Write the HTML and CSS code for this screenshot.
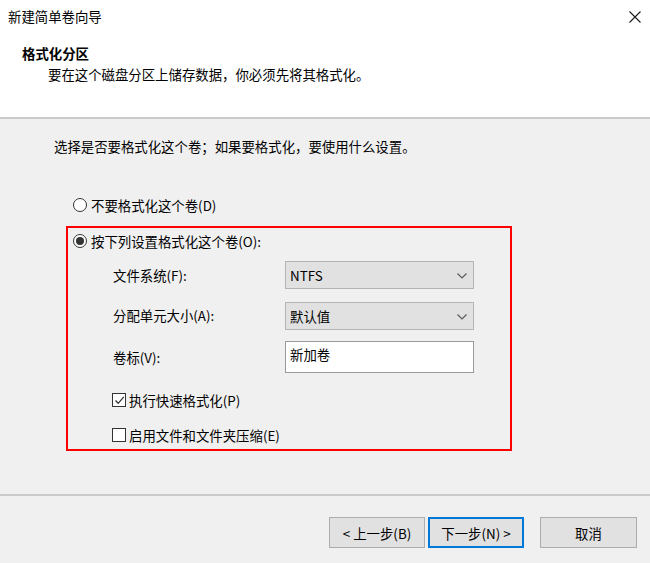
FILE: index.html
```html
<!DOCTYPE html>
<html lang="zh-CN">
<head>
  <meta charset="UTF-8" />
  <meta name="viewport" content="width=device-width, initial-scale=1.0" />
  <title>新建简单卷向导</title>
  <link rel="stylesheet" href="styles.css">
</head>
<body>
  <div class="wizard">
    <header class="head">
      <div class="titlebar">
        <span class="title">新建简单卷向导</span>
        <svg class="close" width="12" height="12" viewBox="0 0 12 12">
          <path d="M0.5 0.5 L11.5 11.5 M11.5 0.5 L0.5 11.5" stroke="#1a1a1a" stroke-width="1.1" fill="none" />
        </svg>
      </div>
      <div class="page-title">格式化分区</div>
      <div class="page-desc">要在这个磁盘分区上储存数据，你必须先将其格式化。</div>
    </header>

    <main class="content">
      <p class="intro">选择是否要格式化这个卷；如果要格式化，要使用什么设置。</p>

      <label class="radio-row outside">
        <span class="radio"></span>不要格式化这个卷(D)
      </label>

      <section class="highlight">
        <label class="radio-row">
          <span class="radio checked"></span>按下列设置格式化这个卷(O):
        </label>

        <div class="fields">
          <span class="field-label">文件系统(F):</span>
          <div class="select">NTFS
            <svg class="chevron" width="10" height="6" viewBox="0 0 10 6">
              <path d="M0.5 0.5 L5 5 L9.5 0.5" stroke="#5a5a5a" stroke-width="1.2" fill="none" />
            </svg>
          </div>

          <span class="field-label">分配单元大小(A):</span>
          <div class="select second">默认值
            <svg class="chevron" width="10" height="6" viewBox="0 0 10 6">
              <path d="M0.5 0.5 L5 5 L9.5 0.5" stroke="#5a5a5a" stroke-width="1.2" fill="none" />
            </svg>
          </div>

          <span class="field-label">卷标(V):</span>
          <div class="textbox">新加卷</div>
        </div>

        <label class="check-row">
          <span class="checkbox">
            <svg width="11" height="11" viewBox="0 0 11 11">
              <path d="M1.5 5.5 L4.2 8.3 L9.8 1.8" stroke="#333" stroke-width="1.3" fill="none" />
            </svg>
          </span>执行快速格式化(P)
        </label>
        <label class="check-row">
          <span class="checkbox"></span>启用文件和文件夹压缩(E)
        </label>
      </section>
    </main>

    <footer class="actions">
      <button class="btn">&lt; 上一步(B)</button>
      <button class="btn default">下一步(N) &gt;</button>
      <button class="btn cancel">取消</button>
    </footer>
  </div>
</body>
</html>
```

FILE: styles.css
```css
body {
  margin: 0;
  font-family: "Noto Sans CJK SC", "Noto Sans", sans-serif;
  font-size: 13.4px;
  line-height: 18px;
  color: #000;
  background-color: #f0f0f0;
}

.wizard {
  height: 100vh;
  display: flex;
  flex-direction: column;
}

/* Kopfbereich */
.head {
  height: 117px;
  background-color: #fff;
  border-bottom: 2px solid #cacaca;
  flex-shrink: 0;
}

.titlebar {
  display: flex;
  justify-content: space-between;
  align-items: center;
  padding: 7px 9px 0 8px;
}

.close {
  margin-top: 1px;
}

.page-title {
  font-weight: 700;
  margin: 19px 0 0 22px;
}

.page-desc {
  margin: 3px 0 0 48px;
}

/* Inhalt */
.content {
  flex: 1;
  padding: 18px 0 0 66px;
}

.intro {
  margin: 0 0 41px -12px;
}

.radio-row {
  display: flex;
  align-items: center;
  gap: 4px;
}

.radio-row.outside {
  padding-left: 7px;
}

.radio {
  width: 12px;
  height: 12px;
  border: 1px solid #333;
  border-radius: 50%;
  background: #fff;
  display: flex;
  align-items: center;
  justify-content: center;
}

.radio.checked::after {
  content: "";
  width: 8px;
  height: 8px;
  border-radius: 50%;
  background: #333;
}

.highlight {
  width: 437px;
  margin-top: 12px;
  border: 2px solid #ff0000;
  padding: 4px 0 5px 5px;
}

.fields {
  display: grid;
  grid-template-columns: 172px 189px;
  align-items: center;
  row-gap: 11px;
  margin: 11px 0 0 40px;
}

.select,
.textbox {
  box-sizing: border-box;
  padding-left: 4px;
}

.select {
  height: 28px;
  background: #e1e1e1;
  border: 1px solid #b4b4b4;
  display: flex;
  align-items: center;
  justify-content: space-between;
  padding-right: 6px;
}

.select.second {
  margin-top: 2px;
}

.textbox {
  height: 32px;
  background: #fff;
  border: 1px solid #9a9a9a;
  padding-top: 3px;
}

.chevron {
  margin-top: 1px;
}

.check-row {
  display: flex;
  align-items: center;
  gap: 3px;
  margin-left: 39px;
}

.fields + .check-row {
  margin-top: 18px;
}

.check-row + .check-row {
  margin-top: 17px;
}

.checkbox {
  width: 12px;
  height: 12px;
  border: 1px solid #333;
  background: #fff;
  display: flex;
  align-items: center;
  justify-content: center;
}

/* Schaltflächen */
.actions {
  flex-shrink: 0;
  border-top: 2px solid #cacaca;
  display: flex;
  justify-content: flex-end;
  align-items: flex-start;
  padding: 21px 13px 0 0;
  box-sizing: border-box;
  height: 69px;
  gap: 3px;
}

.btn {
  width: 96px;
  height: 31px;
  background: #e1e1e1;
  border: 1px solid #adadad;
  font-family: inherit;
  font-size: 13.4px;
  color: #000;
  padding: 0;
}

.btn.default {
  border: 2px solid #0078d7;
}

.btn.cancel {
  width: 97px;
  margin-left: 13px;
}
```
